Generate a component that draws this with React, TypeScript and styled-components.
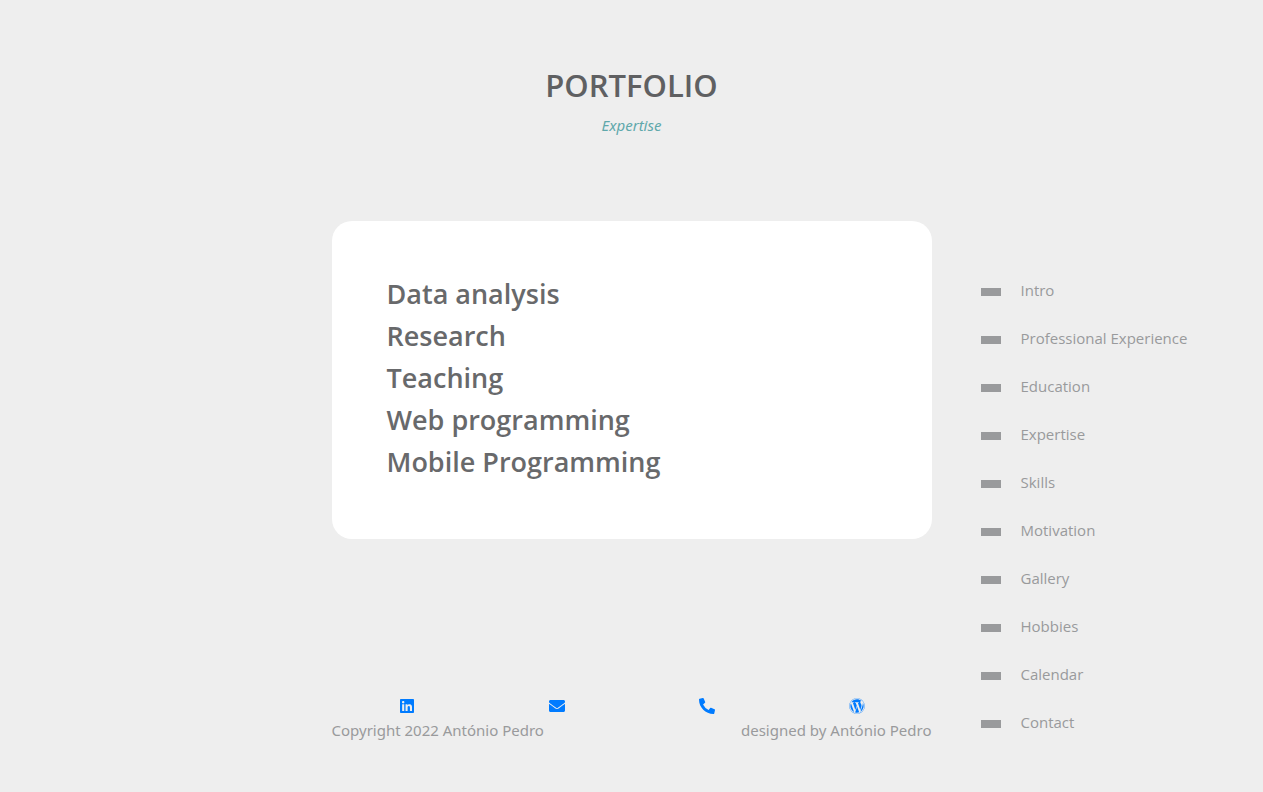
import React from 'react';
import styled, { createGlobalStyle } from 'styled-components';
import { FaLinkedin, FaEnvelope, FaPhoneAlt, FaWordpress } from 'react-icons/fa';

const Global = createGlobalStyle`
  *, *::before, *::after { box-sizing: border-box; }
  body {
    margin: 0;
    background: #eeeeee;
    color: #999a9c;
    font: 400 15px/24px "Open Sans", "Noto Sans", sans-serif;
  }
  h1, h2, p, ul { margin: 0; padding: 0; }
  ul { list-style: none; }
`;

const Page = styled.div`
  min-height: 100vh;
  display: grid;
  grid-template-columns: minmax(0, 1fr) minmax(0, 600px) minmax(0, 1fr);
`;

const Content = styled.main`
  grid-column: 2;
  display: flex;
  flex-direction: column;
  padding: 66px 0 50px;
`;

const Heading = styled.header`
  text-align: center;
  margin-bottom: 84px;
`;

const Title = styled.h1`
  font-family: "Open Sans", "Noto Sans", sans-serif;
  font-size: 31px;
  line-height: 38px;
  font-weight: 550;
  color: #5f6062;
`;

const Subtitle = styled.p`
  margin-top: 9px;
  font-family: "Noto Sans", sans-serif;
  font-size: 15px;
  font-style: italic;
  color: #5fa8ab;
`;

const Card = styled.section`
  padding: 52px 55px 56px;
  border-radius: 20px;
  background: #ffffff;
`;

const Skill = styled.li`
  font-family: "Open Sans", "Noto Sans", sans-serif;
  font-size: 27px;
  line-height: 42px;
  font-weight: 550;
  color: #68696b;
`;

const Footer = styled.footer`
  margin-top: auto;
`;

const Contacts = styled.div`
  display: grid;
  grid-template-columns: repeat(4, 1fr);
`;

const ContactLink = styled.a`
  display: flex;
  align-items: center;
  justify-content: center;
  height: 24px;
  color: #007bff;
`;

const Credits = styled.div`
  display: flex;
  justify-content: space-between;
  white-space: nowrap;
  font-family: "Noto Sans", sans-serif;
`;

const Side = styled.nav`
  grid-column: 3;
  align-self: end;
  padding: 0 0 58px 49px;
`;

const Menu = styled.ul`
  display: flex;
  flex-direction: column;
  gap: 24px;
`;

const MenuLink = styled.a`
  display: flex;
  align-items: center;
  gap: 20px;
  color: #999a9c;
  text-decoration: none;
  white-space: nowrap;

  &::before {
    content: "";
    width: 20px;
    height: 8px;
    margin-top: 4px;
    background: #999a9c;
  }
`;

const skills = ['Data analysis', 'Research', 'Teaching', 'Web programming', 'Mobile Programming'];

const sections = [
  'Intro', 'Professional Experience', 'Education', 'Expertise', 'Skills',
  'Motivation', 'Gallery', 'Hobbies', 'Calendar', 'Contact',
];

const contacts = [
  { label: 'LinkedIn', Icon: FaLinkedin },
  { label: 'Email', Icon: FaEnvelope },
  { label: 'Phone', Icon: FaPhoneAlt },
  { label: 'WordPress', Icon: FaWordpress },
];

export default function App() {
  return (
    <>
      <Global />
      <Page>
        <Content>
          <Heading>
            <Title>PORTFOLIO</Title>
            <Subtitle>Expertise</Subtitle>
          </Heading>
          <Card>
            <ul>{skills.map((skill) => <Skill key={skill}>{skill}</Skill>)}</ul>
          </Card>
          <Footer>
            <Contacts>
              {contacts.map(({ label, Icon }) => (
                <ContactLink key={label} href="#" aria-label={label}><Icon size={16} /></ContactLink>
              ))}
            </Contacts>
            <Credits>
              <span>Copyright 2022 António Pedro</span>
              <span>designed by António Pedro</span>
            </Credits>
          </Footer>
        </Content>
        <Side aria-label="Sections">
          <Menu>
            {sections.map((name) => (
              <li key={name}><MenuLink href={`#${name}`}>{name}</MenuLink></li>
            ))}
          </Menu>
        </Side>
      </Page>
    </>
  );
}
